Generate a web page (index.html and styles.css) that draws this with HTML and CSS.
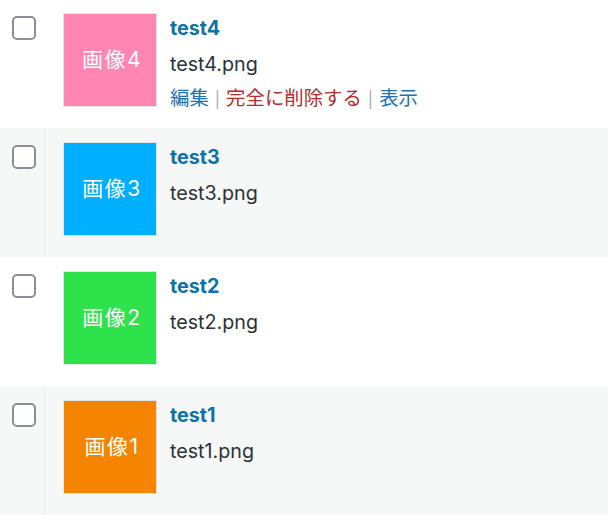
FILE: index.html
```html
<!DOCTYPE html>
<html lang="ja">
<head>
    <meta charset="UTF-8">
    <title>メディアライブラリ</title>
    <link rel="stylesheet" href="styles.css">
</head>
<body>
    <div class="media-list">
        <div class="media-row first">
            <div class="check-col"><span class="checkbox"></span></div>
            <div class="thumb thumb-pink">画像4</div>
            <div class="info">
                <a class="title">test4</a>
                <div class="filename">test4.png</div>
                <div class="actions">
                    <a class="edit">編集</a><span class="sep">|</span><a class="delete">完全に削除する</a><span class="sep">|</span><a class="view">表示</a>
                </div>
            </div>
        </div>
        <div class="media-row alt">
            <div class="check-col"><span class="checkbox"></span></div>
            <div class="thumb thumb-blue">画像3</div>
            <div class="info">
                <a class="title">test3</a>
                <div class="filename">test3.png</div>
            </div>
        </div>
        <div class="media-row">
            <div class="check-col"><span class="checkbox"></span></div>
            <div class="thumb thumb-green">画像2</div>
            <div class="info">
                <a class="title">test2</a>
                <div class="filename">test2.png</div>
            </div>
        </div>
        <div class="media-row alt">
            <div class="check-col"><span class="checkbox"></span></div>
            <div class="thumb thumb-orange">画像1</div>
            <div class="info">
                <a class="title">test1</a>
                <div class="filename">test1.png</div>
            </div>
        </div>
    </div>
</body>
</html>
```

FILE: styles.css
```css
body {
    margin: 0;
    font-family: 'Inter', 'Noto Sans CJK JP', sans-serif;
    color: #2c3338;
    background: #fff;
}

.media-list {
    margin-top: -1px;
}

.media-row {
    display: flex;
    height: 129px;
    box-sizing: border-box;
    background: #fff;
}

.media-row.alt {
    background: #f6f7f7;
}

.check-col {
    width: 45px;
    flex-shrink: 0;
    padding: 17px 0 0 12px;
    box-sizing: border-box;
    border-right: 1px solid transparent;
}

.media-row.alt .check-col {
    border-right-color: #eef0f0;
}

.checkbox {
    display: block;
    width: 24px;
    height: 24px;
    box-sizing: border-box;
    border: 2px solid #8c8f94;
    border-radius: 5px;
    background: #fff;
}

.thumb {
    width: 94px;
    height: 94px;
    margin: 14px 0 0 18px;
    padding: 0 0 5px 4px;
    box-sizing: border-box;
    border: 1px solid #e4e4e4;
    color: #fff;
    font-size: 21px;
    letter-spacing: 1.5px;
    display: flex;
    align-items: center;
    justify-content: center;
    flex-shrink: 0;
}

.thumb-pink { background: #ff85b2; }
.thumb-blue { background: #00afff; }
.thumb-green { background: #2ee24b; }
.thumb-orange { background: #f58500; }

.info {
    padding: 14px 0 0 13px;
    font-size: 19.7px;
}

.title {
    display: block;
    font-weight: 700;
    color: #0a73aa;
    line-height: 30px;
}

.filename {
    line-height: 38px;
    margin-top: 2px;
}

.actions {
    line-height: 32px;
    margin-top: -1px;
    font-size: 19.4px;
}

.edit, .view {
    color: #2271b1;
}

.delete {
    color: #b32d2e;
}

.sep {
    color: #a7aaad;
    margin: 0 6px;
    font-size: 16px;
}
```
